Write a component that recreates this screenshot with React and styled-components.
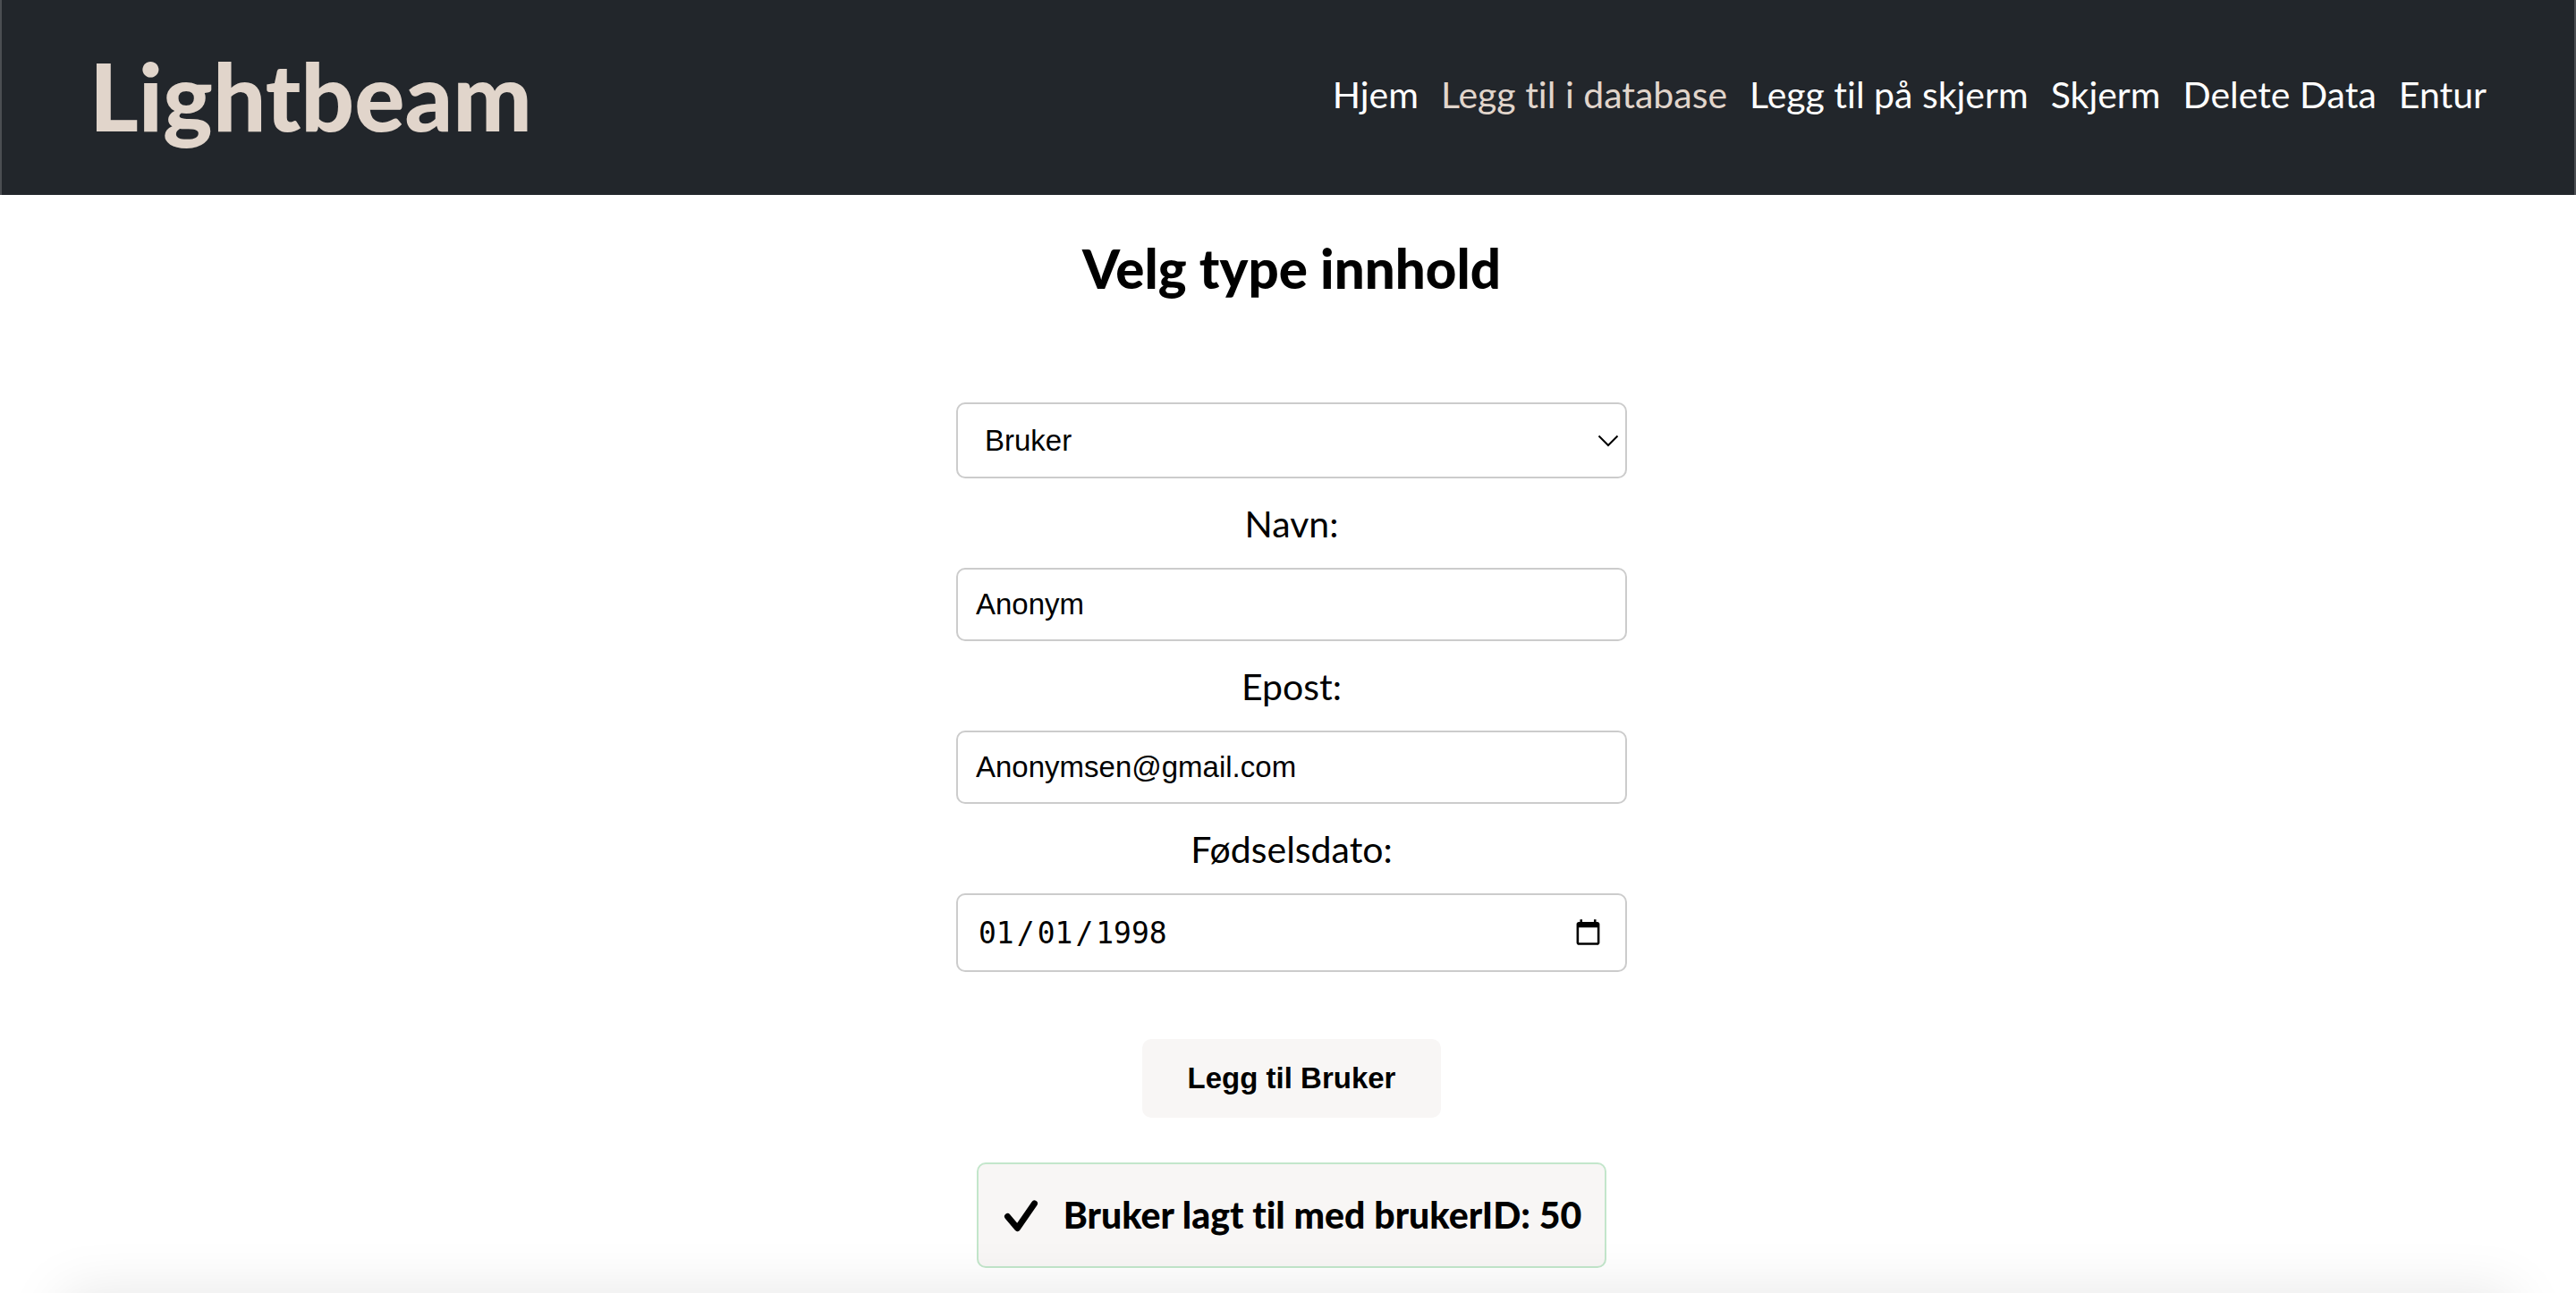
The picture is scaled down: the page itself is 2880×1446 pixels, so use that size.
import React, { useState } from "react";
import styled, { createGlobalStyle } from "styled-components";

const GlobalStyle = createGlobalStyle`
  *, *::before, *::after { box-sizing: border-box; }
  body {
    margin: 0;
    background: #fff;
    color: #000;
    font-family: Lato, "Liberation Sans", sans-serif;
    font-size: 41px;
    font-variant-ligatures: none;
    line-height: 52px;
  }
`;

const Header = styled.header`
  display: flex;
  justify-content: space-between;
  align-items: center;
  min-height: 218px;
  padding: 0 98px 6px;
  background: #22262b;
  border: solid #4b4e52;
  border-width: 0 2px;
`;

const Logo = styled.a`
  color: #e1d5cb;
  font-size: 105px;
  font-weight: 900;
  line-height: 120px;
  text-decoration: none;
`;

const Nav = styled.nav`
  display: flex;
  gap: 25px;
  white-space: nowrap;
`;

const NavLink = styled.a`
  color: ${(p) => (p.$active ? "#e1d5cb" : "#fff")};
  text-decoration: none;
`;

const Main = styled.main`
  display: flex;
  flex-direction: column;
  align-items: center;
  padding: 48px 0 28px 8px;
`;

const Title = styled.h1`
  margin: 0;
  font-size: 60px;
  font-weight: 900;
  line-height: 68px;
`;

const Form = styled.form`
  display: flex;
  flex-direction: column;
  align-items: center;
  width: 750px;
  max-width: 100%;
  margin-top: 116px;
`;

const Label = styled.label`
  margin: 25px 0 23px;
`;

const controlStyle = `
  width: 100%;
  margin: 0;
  background: #fff;
  color: #000;
  border: 2px solid #ccc;
  border-radius: 10px;
  font-size: 33px;
`;

const SelectBox = styled.div`
  display: grid;
  align-items: center;
  width: 100%;

  > * { grid-area: 1 / 1; }
  > svg {
    justify-self: end;
    margin-right: 9px;
    pointer-events: none;
  }
`;

const Select = styled.select`
  ${controlStyle}
  appearance: none;
  height: 85px;
  padding: 0 30px;
  font-family: "Liberation Sans", Arial, sans-serif;
`;

const Input = styled.input`
  ${controlStyle}
  height: 82px;
  padding: 0 20px;
  font-family: "Liberation Sans", Arial, sans-serif;
`;

const DateInput = styled.input`
  ${controlStyle}
  height: 88px;
  padding: 0 23px 0 20px;
  font-family: "DejaVu Sans Mono", monospace;

  &::-webkit-datetime-edit-month-field,
  &::-webkit-datetime-edit-day-field,
  &::-webkit-datetime-edit-year-field {
    padding: 0 3px;
  }
`;

const SubmitButton = styled.button`
  margin-top: 75px;
  padding: 0 51px;
  height: 88px;
  border: 0;
  border-radius: 10px;
  background: #f8f6f5;
  color: #000;
  font: 700 33px "Liberation Sans", Arial, sans-serif;
`;

const Notice = styled.div`
  display: flex;
  align-items: center;
  gap: 25px;
  margin-top: 50px;
  padding: 31px 26px;
  border: 2px solid #c3e6cb;
  border-radius: 10px;
  background: #f8f6f5;
  font-weight: 900;
`;

const BottomShade = styled.div`
  position: fixed;
  top: 100%;
  left: 70px;
  right: 70px;
  height: 120px;
  box-shadow: 0 0 64px rgba(0, 0, 0, 0.1);
  pointer-events: none;
`;

const links = ["Hjem", "Legg til i database", "Legg til på skjerm", "Skjerm", "Delete Data", "Entur"];

export default function App() {
  const [type, setType] = useState("Bruker");
  return (
    <>
      <GlobalStyle />
      <Header>
        <Logo href="#">Lightbeam</Logo>
        <Nav>
          {links.map((text) => (
            <NavLink key={text} href="#" $active={text === "Legg til i database"}>{text}</NavLink>
          ))}
        </Nav>
      </Header>
      <Main>
        <Title id="type-title">Velg type innhold</Title>
        <Form onSubmit={(e) => e.preventDefault()}>
          <SelectBox>
            <Select aria-labelledby="type-title" value={type} onChange={(e) => setType(e.target.value)}>
              <option>Bruker</option>
            </Select>
            <svg width="24" height="14" viewBox="0 0 24 14" fill="none" stroke="#000" strokeWidth="2" aria-hidden="true">
              <path d="M1.500 1.500 12 12 22.500 1.500" />
            </svg>
          </SelectBox>
          <Label htmlFor="navn">Navn:</Label>
          <Input id="navn" type="text" defaultValue="Anonym" />
          <Label htmlFor="epost">Epost:</Label>
          <Input id="epost" type="email" defaultValue="Anonymsen@gmail.com" />
          <Label htmlFor="dato">Fødselsdato:</Label>
          <DateInput id="dato" type="date" defaultValue="1998-01-01" />
          <SubmitButton type="submit">Legg til {type}</SubmitButton>
        </Form>
        <Notice role="status">
          <svg width="44" height="40" viewBox="0 0 44 40" fill="none" stroke="#000" strokeWidth="7" strokeLinecap="round" strokeLinejoin="round" aria-hidden="true">
            <path d="M6.500 21.500 17.500 34.500 36.500 7" />
          </svg>
          <span>Bruker lagt til med brukerID: 50</span>
        </Notice>
      </Main>
      <BottomShade />
    </>
  );
}
